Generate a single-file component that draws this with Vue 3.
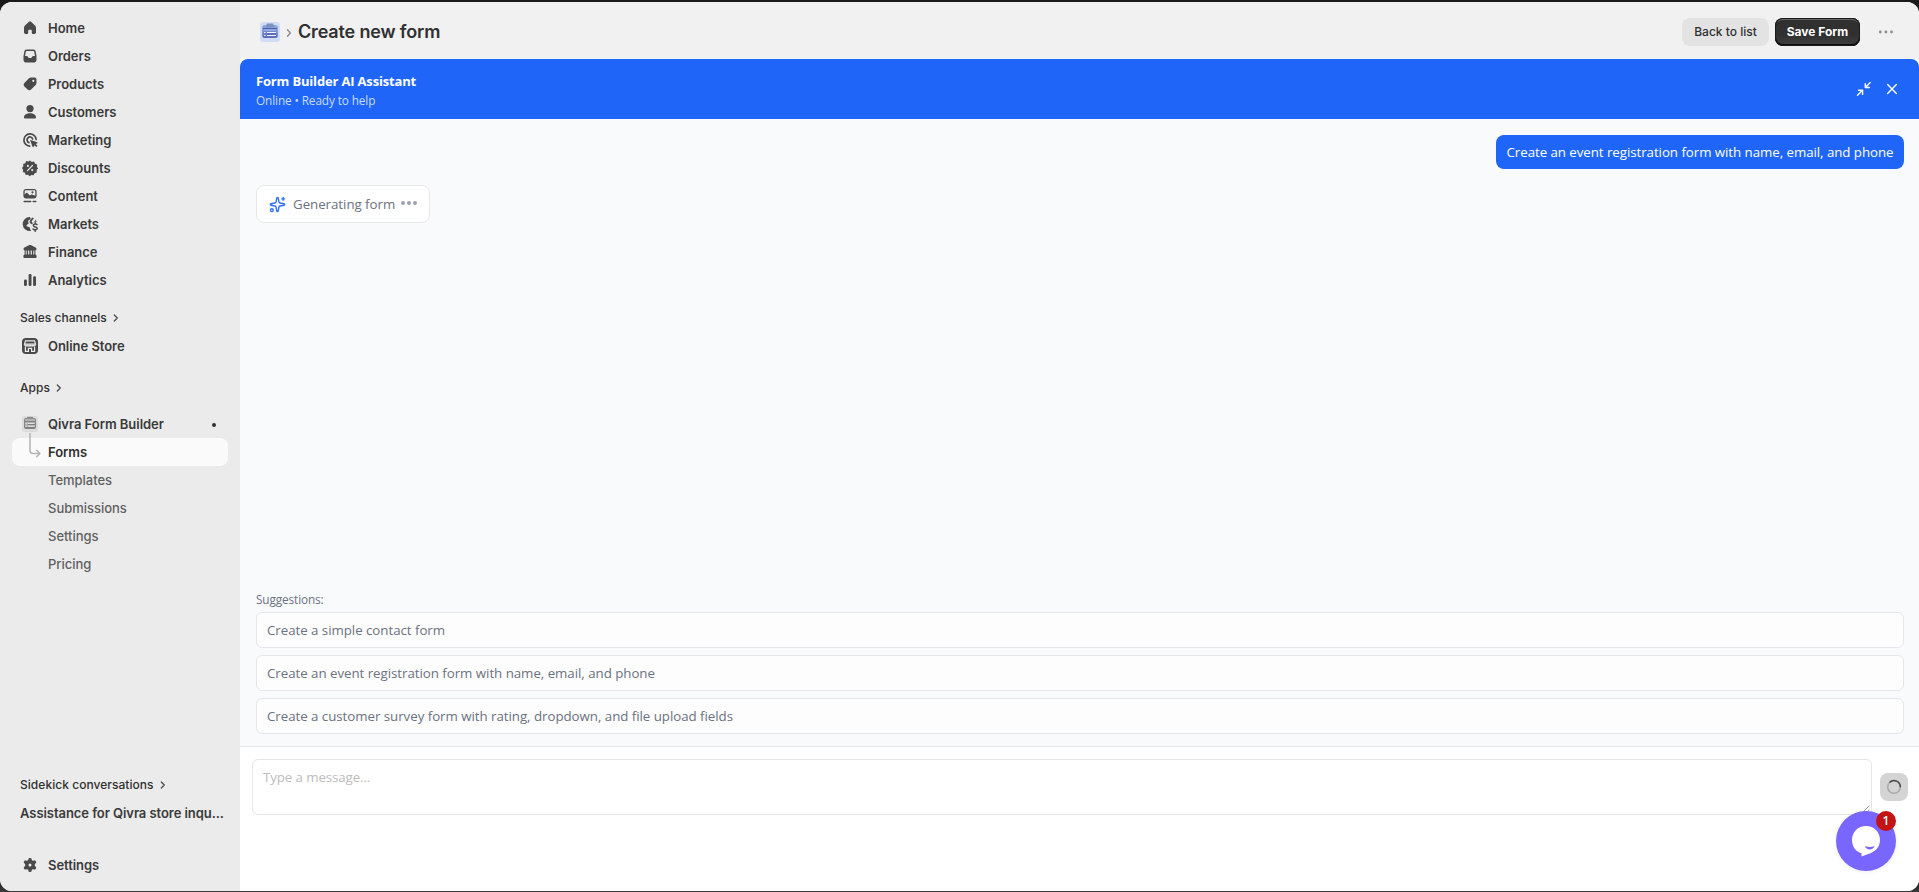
<script setup>
const nav = [
  { id: 'home', label: 'Home' },
  { id: 'orders', label: 'Orders' },
  { id: 'products', label: 'Products' },
  { id: 'customers', label: 'Customers' },
  { id: 'marketing', label: 'Marketing' },
  { id: 'discounts', label: 'Discounts' },
  { id: 'content', label: 'Content' },
  { id: 'markets', label: 'Markets' },
  { id: 'finance', label: 'Finance' },
  { id: 'analytics', label: 'Analytics' },
]

const icons = {
  home: '<path fill-rule="evenodd" d="M8.7 3.9a1.9 1.9 0 0 1 2.6 0l3.7 3.6c.7.7 1 1.500 1 2.400v4.300c0 1.100-.8 1.800-1.800 1.800h-1.500a.9.9 0 0 1-.9-.9v-2.200c0-.7-.4-1.100-1-1.100h-1.600c-.6 0-1 .4-1 1.100v2.200c0 .5-.4.9-.9.9h-1.500c-1 0-1.800-.7-1.800-1.800v-4.300c0-.9.3-1.700 1-2.400z"/>',
  orders: '<path fill-rule="evenodd" d="M6.700 3.400h6.600c1.300 0 2.200.8 2.400 2l.8 4.600v3.700c0 1.700-1.200 2.900-2.900 2.900h-7.200c-1.700 0-2.900-1.200-2.900-2.900v-3.700l.8-4.600c.2-1.200 1.100-2 2.400-2zm.1 1.500c-.6 0-.9.3-1 .8l-.8 4.300h1.500c.7 0 1.100.3 1.400.8l.4.7c.2.3.4.4.8.4h1.800c.4 0 .6-.1.8-.4l.4-.7c.3-.5.7-.8 1.400-.8h1.500l-.8-4.300c-.1-.5-.4-.8-1-.8z"/>',
  products: '<path fill-rule="evenodd" d="M11.300 3.500h3.300c1.100 0 1.900.8 1.900 1.900v3.300c0 1-.4 1.900-1.100 2.600l-4.300 4.300c-1 1-2.500 1-3.500 0l-3.200-3.200c-1-1-1-2.500 0-3.500l4.300-4.300c.7-.7 1.600-1.100 2.600-1.100zm2 4.400a1.100 1.100 0 1 0 0-2.200 1.100 1.100 0 0 0 0 2.200z"/>',
  customers: '<circle cx="10" cy="6.600" r="3.600"/><path d="M4 15.300c0-2.400 2.600-4 6-4s6 1.600 6 4c0 .8-.5 1.300-1.200 1.300h-9.600c-.7 0-1.200-.5-1.200-1.300z"/>',
  marketing: '<g fill="none" stroke="currentColor" stroke-width="1.700" stroke-linecap="round"><path d="M9.700 16.100A6.100 6.100 0 1 1 16.100 9.500"/><path d="M9 12.600A2.900 2.900 0 1 1 12.700 9"/></g><path d="M10.700 9.900l6.500 2.300c.5.200.5.800.1 1l-1.600.9 1.500 1.500c.5.500-.6 1.700-1.200 1.200l-1.600-1.600-.9 1.700c-.2.400-.8.400-1-.1l-2.200-6.400c-.1-.4.100-.6.400-.5z"/>',
  discounts: '<path fill-rule="evenodd" d="M10 2.400l1.800 1.500 2.400-.4.800 2.200 2.200.8-.3 2.300 1.200 1.700-1.500 1.600.2 2.400-2.200.7-.9 2.100-2.300-.3-1.800 1.300-1.600-1.500-2.300.2-.7-2.200-2.200-.9.400-2.200-1.300-1.800 1.500-1.700-.3-2.300 2.200-.7.900-2.100 2.200.4z"/><path d="M7.500 12.600l5-5.200" stroke="#ebebeb" stroke-width="1.300" stroke-linecap="round"/><circle cx="7.900" cy="7.900" r="1.050" fill="#ebebeb"/><circle cx="12.200" cy="12.100" r="1.050" fill="#ebebeb"/>',
  content: '<path fill-rule="evenodd" d="M6 3h8c1.600 0 2.600 1 2.600 2.600v4.200c0 1.600-1 2.600-2.600 2.600H6c-1.600 0-2.600-1-2.600-2.600V5.600C3.400 4 4.400 3 6 3zm-.1 1.300c-.7 0-1.200.5-1.200 1.200v3l1.400-1.400c.5-.4 1-.4 1.500.1l2.300 2.300 1-.8c.5-.4 1.100-.4 1.600 0l2.800 1V5.500c0-.7-.5-1.200-1.200-1.200zM12.500 7.400a1.100 1.100 0 1 0 0-2.200 1.100 1.100 0 0 0 0 2.200z"/><path d="M4.200 15.500h6.500M13.200 15.500h2.600" stroke="currentColor" stroke-width="1.500" stroke-linecap="round"/>',
  markets: '<path d="M10 3a7 7 0 1 0 1.300 13.800c-.9-.7-1.500-1.700-1.100-2.500l-.7-1.100-2.200-.6c-.9-.3-1-1.300-.3-1.900L8.700 9.400 8.100 7.700c-.2-.6 0-1.200.6-1.500l2.100-1.100z"/><path d="M12.200 3.500l1.900 1-1.700 1.400-.9 2.100 1.300.9 1.900-1.700 1-1.500a7 7 0 0 1 1 2.200c-2.200-.3-4 .8-4.400 2.500l-1.500-.6-1.400-1.700.9-2.200z"/><path d="M17 10.700c-.5-.8-3.700-1.100-3.700.8s3.900.9 3.900 2.900c0 1.800-3.400 1.700-4.100.6M15.200 8.800v1.300M15.200 16v1.200" fill="none" stroke="currentColor" stroke-width="1.500" stroke-linecap="round"/>',
  finance: '<path fill-rule="evenodd" d="M8.800 3.300c.8-.4 1.600-.4 2.400 0l4.400 2.300c.6.300.9.700.9 1.300 0 .7-.5 1.200-1.100 1.300v4.400c.7.200 1.200.8 1.200 1.500v1c0 .6-.4.900-.9.900H4.300c-.5 0-.9-.3-.9-.9v-1c0-.7.500-1.300 1.200-1.500V8.200c-.6-.1-1.100-.6-1.100-1.300 0-.6.3-1 .9-1.300zM5.700 8.600v3.900h1V8.600zm2.400 0v3.900h1.200V8.600zm2.600 0v3.900h1.200V8.600zm2.600 0v3.900h1V8.600z"/>',
  analytics: '<rect x="4" y="9.400" width="2.900" height="6.600" rx="1.200"/><rect x="8.600" y="4" width="2.900" height="12" rx="1.200"/><rect x="13.100" y="6.300" width="2.900" height="9.700" rx="1.200"/>',
}

const subNav = ['Forms', 'Templates', 'Submissions', 'Settings', 'Pricing']

const suggestions = [
  'Create a simple contact form',
  'Create an event registration form with name, email, and phone',
  'Create a customer survey form with rating, dropdown, and file upload fields',
]
</script>

<template>
  <div class="screen">
    <div class="frame">
      <aside class="sidebar">
        <nav class="group">
          <a v-for="item in nav" :key="item.id" class="row">
            <svg class="ico" viewBox="0 0 20 20" fill="currentColor" v-html="icons[item.id]"></svg>
            <span>{{ item.label }}</span>
          </a>
        </nav>

        <div class="heading sales">
          <span>Sales channels</span>
          <svg class="chev" viewBox="0 0 8 10"><path d="M2.300 2l3 3-3 3" /></svg>
        </div>
        <a class="row">
          <svg class="ico" viewBox="0 0 20 20">
            <rect x="2" y="2" width="16" height="16" rx="4" fill="#4a4a4a" />
            <g fill="none" stroke="#ebebeb" stroke-width="1.200">
              <path d="M5.500 4.900h9l1 3.200h-11z" />
              <path d="M4.500 8.300c0 2 2.700 2 2.800.2.200 1.800 2.500 1.800 2.700 0 .2 1.800 2.500 1.800 2.700 0 .1 1.800 2.800 1.800 2.800-.2" />
              <path d="M5.400 10.500v4.800h3v-3h3.200v3h3v-4.800" />
            </g>
          </svg>
          <span>Online Store</span>
        </a>

        <div class="heading apps">
          <span>Apps</span>
          <svg class="chev" viewBox="0 0 8 10"><path d="M2.300 2l3 3-3 3" /></svg>
        </div>
        <a class="row app">
          <svg class="ico" viewBox="0 0 20 20">
            <rect x="2" y="2" width="16" height="16" rx="2.500" fill="#dcdcdc" />
            <rect x="4.500" y="4.500" width="11" height="10" rx="1" fill="#b4b4b4" stroke="#858585" />
            <path d="M7 2.800h6v2.200H7z" fill="#909090" />
            <path d="M4.500 7.500h11M7.500 10.500h7.500M4.500 13.500h11" stroke="#808080" />
            <path d="M8 9.500h6.500M8 12.300h6.500M5.600 9.500h1.200M5.600 12.300h1.200" stroke="#dedede" />
          </svg>
          <span>Qivra Form Builder</span>
          <i class="pip"></i>
        </a>
        <nav class="subnav">
          <a v-for="(label, i) in subNav" :key="label" class="row sub" :class="{ active: i === 0 }">
            <span>{{ label }}</span>
          </a>
          <svg class="branch" viewBox="0 0 14 26">
            <path d="M2 0v17.500q0 3 3 3h6.800M8.700 17.300l3.200 3.200-3.200 3.200" />
          </svg>
        </nav>

        <div class="bottom">
          <div class="heading side">
            <span>Sidekick conversations</span>
            <svg class="chev" viewBox="0 0 8 10"><path d="M2.300 2l3 3-3 3" /></svg>
          </div>
          <div class="convo">Assistance for Qivra store inqu...</div>
          <a class="row settings">
            <svg class="ico" viewBox="0 0 20 20" fill="currentColor">
              <path fill-rule="evenodd" d="M8.500 3.700c.1-.5.500-.8 1-.8h1c.5 0 .9.300 1 .8l.4 1.500 1 .6 1.500-.4c.5-.1 1 .1 1.200.5l.5.900c.3.400.2.900-.2 1.300l-1.100 1.100v1.600l1.100 1.100c.4.400.5.900.2 1.300l-.5.900c-.2.400-.7.600-1.200.5l-1.500-.4-1 .6-.4 1.500c-.1.500-.5.800-1 .8h-1c-.5 0-.9-.3-1-.8l-.4-1.500-1-.6-1.500.4c-.5.100-1-.1-1.200-.5l-.5-.9c-.3-.4-.2-.9.2-1.300l1.100-1.100V9.200L4.100 8.100c-.4-.4-.5-.9-.2-1.300l.5-.9c.2-.4.700-.6 1.200-.5l1.500.4 1-.6zM10 11.500a1.500 1.500 0 1 0 0-3 1.500 1.500 0 0 0 0 3z" />
            </svg>
            <span>Settings</span>
          </a>
        </div>
      </aside>

      <main class="main">
        <header class="topbar">
          <svg class="appicon" viewBox="0 0 20 20">
            <defs>
              <linearGradient id="board" x1="0" y1="0" x2="0" y2="1">
                <stop offset="0" stop-color="#8fb0e0" /><stop offset="1" stop-color="#5b68bd" />
              </linearGradient>
            </defs>
            <rect width="20" height="20" rx="3.500" fill="#d0def5" />
            <rect x="2.200" y="3" width="15.600" height="13" rx="2" fill="url(#board)" />
            <path d="M6 3.500l1-1.900h6l1 1.900v1.700H6z" fill="#7d92bd" />
            <path d="M4 8h12" stroke="#a9c0ea" />
            <path d="M7 10.500h9M7 13.500h9M4 10.500h1.500M4 13.500h1.500" stroke="#f0f5ff" />
            <path d="M3 6.500h14M7 12h9" stroke="#4a5fb2" />
          </svg>
          <svg class="crumb" viewBox="0 0 6 10"><path d="M1.500 1.800L4.300 5 1.500 8.200" /></svg>
          <h1>Create new form</h1>
          <button class="btn back">Back to list</button>
          <button class="btn save">Save Form</button>
          <svg class="more" viewBox="0 0 16 4">
            <circle cx="2.300" cy="2" r="1.400" /><circle cx="7.900" cy="2" r="1.400" /><circle cx="13.500" cy="2" r="1.400" />
          </svg>
        </header>

        <section class="chat">
          <div class="banner">
            <div class="who">
              <strong>Form Builder AI Assistant</strong>
              <small>Online • Ready to help</small>
            </div>
            <svg class="shrink" viewBox="0 0 16 16">
              <path d="M14.200 1.500L9.400 6.400M9.300 2.600v3.900h4M1.500 14.200l5-4.900M2.500 9.200h4.100v4.200" />
            </svg>
            <svg class="close" viewBox="0 0 12 12"><path d="M1.600 1.600l8.800 8.800M10.400 1.600l-8.800 8.800" /></svg>
          </div>

          <div class="log">
            <div class="mine"><span>Create an event registration form with name, email, and phone</span></div>
            <div class="pending">
              <svg class="spark" viewBox="0 0 24 24">
                <path d="M11.017 2.814a1 1 0 0 1 1.966 0l1.051 5.558a2 2 0 0 0 1.594 1.594l5.558 1.051a1 1 0 0 1 0 1.966l-5.558 1.051a2 2 0 0 0-1.594 1.594l-1.051 5.558a1 1 0 0 1-1.966 0l-1.051-5.558a2 2 0 0 0-1.594-1.594l-5.558-1.051a1 1 0 0 1 0-1.966l5.558-1.051a2 2 0 0 0 1.594-1.594z" />
                <path d="M20 2v4M22 4h-4" /><circle cx="4" cy="20" r="2" />
              </svg>
              <span>Generating form</span>
              <div class="dots"><i></i><i></i><i></i></div>
            </div>
            <div class="suggest">
              <p>Suggestions:</p>
              <div v-for="s in suggestions" :key="s" class="option"><span>{{ s }}</span></div>
            </div>
          </div>

          <footer class="composer">
            <div class="field">
              <span>Type a message...</span>
              <svg class="grip" viewBox="0 0 8 8"><path d="M.5 7.500l7-7M4.500 7.500l3-3" /></svg>
            </div>
            <div class="send">
              <svg viewBox="0 0 16 16">
                <circle cx="8" cy="8" r="6.300" stroke="#a9a9a9" />
                <path d="M3.500 3.500A6.300 6.300 0 0 1 14.300 8.300" stroke="#4d4d4d" />
              </svg>
            </div>
          </footer>
        </section>
      </main>

      <div class="widget">
        <svg viewBox="0 0 60 60">
          <circle cx="30" cy="30" r="30" fill="#7866ff" />
          <path d="M30 15c8 0 14 6 14 14 0 6.500-4 11-9.500 13.200L25.500 45.500v-3.300C19.500 40.500 16 35.500 16 29c0-8 6-14 14-14z" fill="#fff" />
          <path d="M29 35c3 1.300 6.500 1.300 9.500 0-.6 2.200-2.400 3.500-4.800 3.500S29.600 37.200 29 35z" fill="#7866ff" />
        </svg>
        <b>1</b>
      </div>
    </div>
  </div>
</template>

<style>
html, body { margin: 0; overflow: hidden; background: #1a1a1a; }
</style>

<style scoped>
* { box-sizing: border-box; }
.screen {
  width: 1919px; height: 892px; padding: 2px 0 1px;
  background: linear-gradient(#1a1a1a 880px, #3b3b3b 892px);
  font-family: Inter, "Liberation Sans", sans-serif; color: #303030;
}
.frame { position: relative; display: flex; height: 889px; border-radius: 12px; overflow: hidden; background: #fff; }
.sidebar { display: flex; flex-direction: column; width: 240px; padding: 12px 12px 12px; background: #ebebeb; flex: none; }
.row {
  display: flex; align-items: center; height: 28px; padding: 0 12px 0 8px; border-radius: 8px;
  font-size: 13px; font-weight: 600; letter-spacing: -0.04px; white-space: nowrap; color: #3a3a3a;
}
.row .ico { width: 20px; height: 20px; margin-right: 8px; flex: none; color: #4a4a4a; }
.heading { display: flex; align-items: center; height: 28px; padding: 0 0 2px 8px; font-size: 12px; font-weight: 550; letter-spacing: 0.04px; }
.heading .chev { width: 8px; height: 10px; margin: 1px 0 0 5px; }
.chev path { fill: none; stroke: #4a4a4a; stroke-width: 1.3; stroke-linecap: round; stroke-linejoin: round; }
.sales { margin-top: 10px; }
.apps { margin-top: 14px; }
.app { margin-top: 8px; }
.pip { width: 4px; height: 4px; margin: 1px 0 0 auto; border-radius: 50%; background: #303030; }
.subnav { position: relative; }
.sub { padding-left: 36px; font-weight: 450; letter-spacing: -0.02px; color: #616161; }
.sub.active { background: #fafafa; color: #303030; font-weight: 600; }
.branch { position: absolute; left: 16px; top: -5px; width: 14px; height: 26px; }
.branch path { fill: none; stroke: #b5b5b5; stroke-width: 1.5; stroke-linecap: round; stroke-linejoin: round; }
.bottom { margin-top: auto; }
.convo { height: 28px; padding-left: 8px; line-height: 28px; font-size: 13px; font-weight: 600; letter-spacing: -0.06px; color: #3a3a3a; white-space: nowrap; }
.settings { margin-top: 24px; }

.main { display: flex; flex-direction: column; flex: 1; min-width: 0; }
.topbar { display: flex; align-items: center; height: 57px; padding: 3px 25px 0 20px; background: #f1f1f1; }
.appicon { width: 20px; height: 20px; }
.crumb { width: 6px; height: 10px; margin: 2px 6px 0 6px; }
.crumb path { fill: none; stroke: #8a8a8a; stroke-width: 1.3; stroke-linecap: round; }
h1 { margin: 0; font-size: 18px; font-weight: 600; line-height: 24px; letter-spacing: -0.16px; }
.btn { height: 28px; padding: 0 0 1px; border: 0; border-radius: 8px; font-family: inherit; font-size: 12px; color: #303030; }
.back { width: 87px; margin-left: auto; background: #e3e3e3; font-weight: 550; }
.save {
  width: 85px; margin-left: 6px; color: #fff; font-weight: 700;
  background: linear-gradient(#303030 60%, #404040);
  box-shadow: inset 0 0 0 1px #1a1a1a, inset 0 2px 0 #666, inset 0 -1px 0 1px #0d0d0d;
}
.more { width: 16px; height: 4px; margin-left: 18px; fill: #8a8a8a; }

.chat { display: flex; flex-direction: column; flex: 1; font-family: "Open Sans", "Noto Sans", sans-serif; }
.banner {
  display: flex; align-items: center; height: 60px; padding: 0 21px 0 16px; color: #fff;
  background: #1f66f8; border-radius: 8px 8px 0 0;
}
.who { display: flex; flex-direction: column; margin-right: auto; }
.who strong { font-size: 13px; line-height: 20px; font-weight: 700; letter-spacing: -0.17px; }
.who small { padding-top: 1px; margin-bottom: -1px; font-size: 11.800px; line-height: 16px; letter-spacing: -0.12px; color: #c9dcff; }
.banner path { fill: none; stroke: #fff; stroke-width: 1.4; stroke-linecap: round; stroke-linejoin: round; }
.shrink { width: 16px; height: 16px; margin-right: 14px; }
.close { width: 12px; height: 12px; }
.log { display: flex; flex-direction: column; flex: 1; padding: 16px 15px 12px 16px; background: #f9fafc; font-size: 13.300px; letter-spacing: -0.035px; }
.mine { align-self: flex-end; width: 408px; height: 34px; padding-left: 10.500px; line-height: 34px; color: #fff; background: #1f66f8; border-radius: 8px; letter-spacing: -0.05px; white-space: nowrap; }
.pending {
  display: flex; align-items: center; width: 174px; height: 38px; margin-top: 16px; padding-left: 12px;
  background: #fff; border: 1px solid #e5e7eb; border-radius: 8px; color: #6b7280; white-space: nowrap;
}
.spark { width: 17px; height: 17px; margin-right: 7px; fill: none; stroke: #3370ee; stroke-width: 2; stroke-linecap: round; stroke-linejoin: round; }
.pending span { width: 102px; }
.dots { display: flex; gap: 2px; margin: -2px 0 0 6px; }
.dots i { width: 4px; height: 4px; border-radius: 50%; background: #9ca3af; }
.suggest { display: flex; flex-direction: column; gap: 7px; margin-top: auto; }
.suggest p { margin: 0 0 -3px; height: 18px; line-height: 18px; font-size: 11.800px; letter-spacing: -0.12px; color: #6b7280; }
.option { height: 36px; padding-left: 10px; line-height: 34px; border: 1px solid #e5e7eb; border-radius: 6px; background: #fdfdfe; color: #6b7280; white-space: nowrap; }
.composer { display: flex; height: 145px; padding: 12px 11px 0 12px; border-top: 1px solid #e5e7eb; background: #fff; }
.field { position: relative; width: 1620px; height: 56px; padding: 7px 10px; border: 1px solid #e5e5e8; border-radius: 6px; font-size: 13.300px; letter-spacing: -0.1px; line-height: 20px; color: #bcbcbc; }
.grip { position: absolute; right: 1px; bottom: 1px; width: 8px; height: 8px; }
.grip path { stroke: #888; stroke-width: .8; }
.send { display: flex; align-items: center; justify-content: center; width: 28px; height: 28px; margin: 14px 0 0 8px; border-radius: 8px; background: #d4d4d4; }
.send svg { width: 16px; height: 16px; fill: none; stroke-width: 1.6; }
.widget { position: absolute; left: 1836px; top: 809px; width: 60px; height: 60px; border-radius: 50%; box-shadow: 0 1px 4px rgba(0, 0, 0, .08); }
.widget svg { display: block; width: 60px; height: 60px; }
.widget b {
  position: absolute; left: 40px; top: 0; width: 20px; height: 20px; border-radius: 50%; background: #c31313;
  color: #fff; font: 600 12px/20px "Open Sans", sans-serif; text-align: center;
}
</style>
